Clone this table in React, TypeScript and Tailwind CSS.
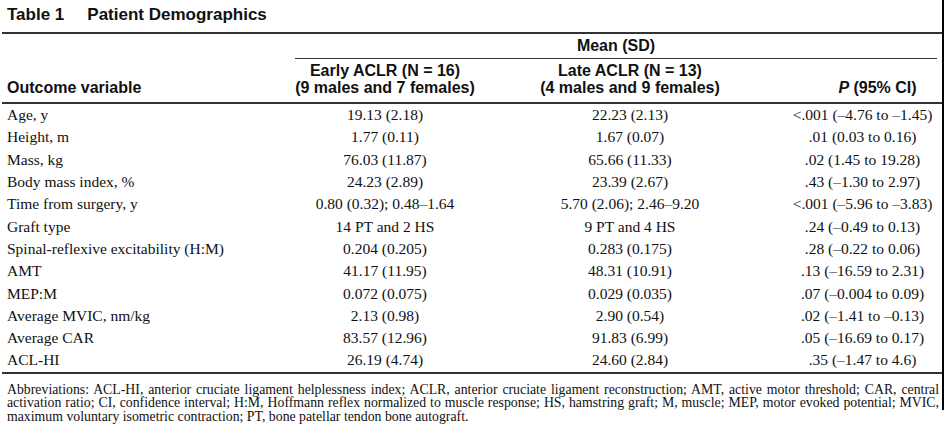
const rows: [string, string, string, string][] = [
  ['Age, y', '19.13 (2.18)', '22.23 (2.13)', '<.001 (–4.76 to –1.45)'],
  ['Height, m', '1.77 (0.11)', '1.67 (0.07)', '.01 (0.03 to 0.16)'],
  ['Mass, kg', '76.03 (11.87)', '65.66 (11.33)', '.02 (1.45 to 19.28)'],
  ['Body mass index, %', '24.23 (2.89)', '23.39 (2.67)', '.43 (–1.30 to 2.97)'],
  ['Time from surgery, y', '0.80 (0.32); 0.48–1.64', '5.70 (2.06); 2.46–9.20', '<.001 (–5.96 to –3.83)'],
  ['Graft type', '14 PT and 2 HS', '9 PT and 4 HS', '.24 (–0.49 to 0.13)'],
  ['Spinal-reflexive excitability (H:M)', '0.204 (0.205)', '0.283 (0.175)', '.28 (–0.22 to 0.06)'],
  ['AMT', '41.17 (11.95)', '48.31 (10.91)', '.13 (–16.59 to 2.31)'],
  ['MEP:M', '0.072 (0.075)', '0.029 (0.035)', '.07 (–0.004 to 0.09)'],
  ['Average MVIC, nm/kg', '2.13 (0.98)', '2.90 (0.54)', '.02 (–1.41 to –0.13)'],
  ['Average CAR', '83.57 (12.96)', '91.83 (6.99)', '.05 (–16.69 to 0.17)'],
  ['ACL-HI', '26.19 (4.74)', '24.60 (2.84)', '.35 (–1.47 to 4.6)'],
];

export default function App() {
  return (
    <div className="flex items-start w-[945px] h-[427px] bg-white text-[#111]">
      <div className="w-[942px] pl-[2px] pt-[5px]">
        {/* title */}
        <div className="pl-[5px] h-[19px] leading-[19px] mb-[8px] text-[17px] font-bold font-['Liberation_Sans',sans-serif]">
          <span>Table 1</span>
          <span className="ml-[23px]">Patient Demographics</span>
        </div>
        <div className="h-[2px] bg-[#333]" />

        {/* header */}
        <div className="font-['Liberation_Sans',sans-serif] font-bold text-[16px]">
          <div className="grid grid-cols-[293px_180px_310px_155px]">
            <div />
            <div className="col-span-3 h-[25px] mr-[3px] border-b border-[#333] text-center leading-[24px]">
              Mean (SD)
            </div>
          </div>
          <div className="grid grid-cols-[293px_180px_310px_155px] h-[45px] border-b-2 border-[#333] leading-[16.5px]">
            <div className="flex flex-col justify-end pb-[6px] pl-[5px]">Outcome variable</div>
            <div className="flex flex-col justify-end pb-[6px] text-center whitespace-nowrap">
              <span>Early ACLR (N = 16)</span>
              <span>(9 males and 7 females)</span>
            </div>
            <div className="flex flex-col justify-end pb-[6px] text-center whitespace-nowrap">
              <span>Late ACLR (N = 13)</span>
              <span>(4 males and 9 females)</span>
            </div>
            <div className="flex flex-col justify-end pb-[6px] pl-[30px] text-center whitespace-nowrap">
              <span>
                <i>P</i> (95% CI)
              </span>
            </div>
          </div>
        </div>

        {/* body */}
        <div className="border-b-2 border-[#333] font-['Liberation_Serif',serif] text-[15.5px]">
          {rows.map((r) => (
            <div key={r[0]} className="grid grid-cols-[293px_180px_310px_155px] h-[22.3px] items-center leading-[18px]">
              <div className="pl-[5px] whitespace-nowrap">{r[0]}</div>
              <div className="text-center whitespace-nowrap">{r[1]}</div>
              <div className="text-center whitespace-nowrap">{r[2]}</div>
              <div className="text-center whitespace-nowrap">{r[3]}</div>
            </div>
          ))}
        </div>

        {/* footnote */}
        <div className="mt-[9px] pl-[5px] pr-[3px] font-['Liberation_Serif',serif] text-[13.8px] leading-[13.5px]">
          <div className="text-justify [text-align-last:justify] whitespace-nowrap">
            Abbreviations: ACL-HI, anterior cruciate ligament helplessness index; ACLR, anterior cruciate ligament reconstruction; AMT, active motor threshold; CAR, central
          </div>
          <div className="text-justify [text-align-last:justify] whitespace-nowrap">
            activation ratio; CI, confidence interval; H:M, Hoffmann reflex normalized to muscle response; HS, hamstring graft; M, muscle; MEP, motor evoked potential; MVIC,
          </div>
          <div>maximum voluntary isometric contraction; PT, bone patellar tendon bone autograft.</div>
        </div>
      </div>
      <div className="w-[2px] h-[410px] bg-black" />
    </div>
  );
}
